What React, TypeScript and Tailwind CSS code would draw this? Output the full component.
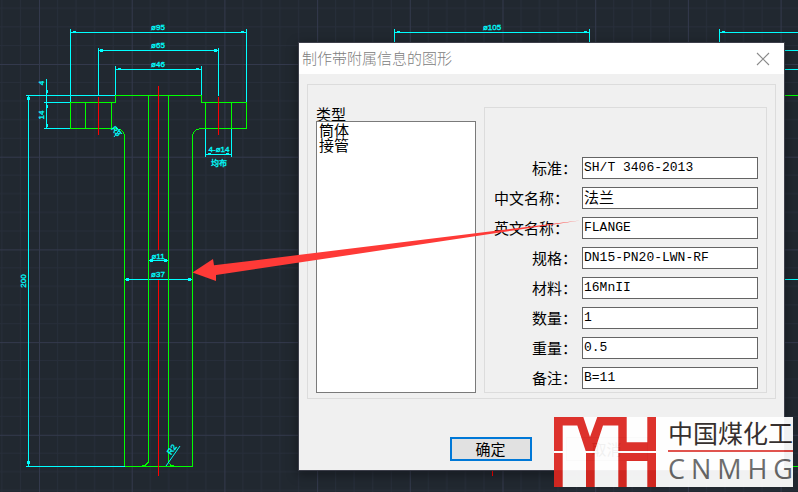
import { useState } from "react";

interface IField {
  id: string;
  label: string;
  value: string;
}

const types = ["筒体", "接管"];

const initialFields: IField[] = [
  { id: "standard", label: "标准：", value: "SH/T 3406-2013" },
  { id: "nameCn", label: "中文名称：", value: "法兰" },
  { id: "nameEn", label: "英文名称：", value: "FLANGE" },
  { id: "spec", label: "规格：", value: "DN15-PN20-LWN-RF" },
  { id: "material", label: "材料：", value: "16MnII" },
  { id: "count", label: "数量：", value: "1" },
  { id: "weight", label: "重量：", value: "0.5" },
  { id: "remark", label: "备注：", value: "B=11" },
];

// CAD model space: grid + flange drawing
function Drawing() {
  return (
    <svg className="absolute inset-0 h-full w-full" aria-hidden="true">
      <defs>
        <pattern id="grid" x="39" y="64" width="92.7" height="92.7" patternUnits="userSpaceOnUse">
          <path
            d="M18.5 0V92.7M37 0V92.7M55.6 0V92.7M74.2 0V92.7M0 18.5H92.7M0 37H92.7M0 55.6H92.7M0 74.2H92.7"
            stroke="#272e3a"
          />
          <path d="M0.5 0V92.7M0 0.5H92.7" stroke="#33394c" />
        </pattern>
      </defs>
      <rect width="100%" height="100%" fill="url(#grid)" />

      {/* dimensions */}
      <g stroke="#00ffff" fill="none" shapeRendering="crispEdges">
        <path d="M70 32.5H247M70.5 29V102M246.5 29V102" />
        <path d="M98 50.5H219M98.5 48V96M218.5 48V96" />
        <path d="M115 69.5H202M115.5 66V96M201.5 66V96" />
        <path d="M26 95.5H115M28.5 96V466" />
        <path d="M46.5 79V129M44 102.5H70M44 128.5H70" />
        <path d="M205.5 129V157M231.5 129V157M205 154.5H232" />
        <path d="M149 260.5H168M125 279.5H192" />
        <path d="M394.5 43V29M394 32.5H590M589.5 29V43" />
        <path d="M719.5 43V29M719 32.5H798M784 50.5H798M784 69.5H798M784 279.5H798" />
      </g>
      {/* arrow heads */}
      <g fill="#00ffff" shapeRendering="crispEdges">
        <path d="M73 31h3v1h-3zM241 31h3v1h-3zM118 68h3v1h-3zM196 68h3v1h-3zM397 31h3v1h-3zM584 31h3v1h-3zM722 31h3v1h-3z" />
        <path d="M100 49h3v3h-3zM214 49h3v3h-3zM27 97h3v3h-3zM27 461h3v3h-3zM47 90h1v3h-1zM47 105h1v3h-1zM47 124h1v3h-1z" />
        <path d="M208 153h3v1h-3zM226 153h3v1h-3zM150 259h3v3h-3zM164 259h3v3h-3zM126 278h3v3h-3zM188 278h3v3h-3z" />
      </g>

      {/* outline */}
      <g stroke="#00ff00" fill="none" shapeRendering="crispEdges">
        <path d="M70.5 102V129M246.5 102V129M70 102.5H116M201 102.5H247M115.5 95V103M201.5 95V103" />
        <path d="M115 95.5H202" />
        <path d="M70 128.5H117M200 128.5H247M124.5 137V467M192.5 137V467M124 466.5H193" />
        <path d="M116 128.5Q124.5 129 124.5 138M201 128.5Q192.5 129 192.5 138" />
        <path d="M85.5 102V128M111.5 102V128M205.5 102V128M231.5 102V128" />
        <path d="M148.5 96V462L145 465.5H142M168.5 96V462L171 465.5H174" />
        <path d="M784 95.5H798M784 466.5H798" />
      </g>
      <path d="M26 466.5H125" stroke="#00ffff" shapeRendering="crispEdges" />
      {/* axes */}
      <path
        d="M158.5 86V250M158.5 280V476M98.5 97V135M218.5 97V135M492.5 470V476"
        stroke="#ff0000"
        shapeRendering="crispEdges"
      />
      <path d="M180 446L166 466M116 127L122 134M114 137L120 129" stroke="#00ffff" />

      <g
        fill="#00ffff"
        stroke="#00ffff"
        strokeWidth="0.3"
        textAnchor="middle"
        className="font-['Liberation_Sans_Narrow','Liberation_Sans','Noto_Sans_CJK_SC',sans-serif] text-[8px]"
      >
        <text x="158" y="30">ø95</text>
        <text x="158" y="48">ø65</text>
        <text x="158" y="67">ø46</text>
        <text x="158" y="259">ø11</text>
        <text x="158" y="277">ø37</text>
        <text x="492" y="30">ø105</text>
        <text x="219" y="152">4-ø14</text>
        <text x="219" y="166">均布</text>
        <text transform="translate(44 83) rotate(-90)">4</text>
        <text transform="translate(44 115) rotate(-90)">14</text>
        <text transform="translate(26 281) rotate(-90)">200</text>
        <text transform="translate(114 133) rotate(50)">R3</text>
        <text transform="translate(174 451) rotate(-55)">R2</text>
      </g>
    </svg>
  );
}

function PropertyDialog() {
  const [fields, setFields] = useState<IField[]>(initialFields);

  const onChange = (id: string, value: string) => {
    setFields(fields.map((f) => (f.id === id ? { ...f, value } : f)));
  };

  return (
    <section
      role="dialog"
      aria-labelledby="dialog-title"
      className="absolute top-[43px] left-[299px] w-[485px] bg-[#f0f0f0] text-[15px] text-black shadow-[0_0_0_1px_#3d3f4a,0_3px_10px_2px_rgba(0,0,0,0.35)]"
    >
      <header className="flex h-[31px] items-center justify-between bg-white pr-3 pl-[3px]">
        <h1 id="dialog-title" className="font-light text-[#808080]">
          制作带附属信息的图形
        </h1>
        <button type="button" aria-label="关闭" className="p-[2px]">
          <svg width="14" height="14" viewBox="0 0 14 14" stroke="#8a8a8a" strokeWidth="1.1">
            <path d="M1 1L13 13M13 1L1 13" />
          </svg>
        </button>
      </header>

      <form className="px-2 pt-[10px] pb-[9px]" onSubmit={(e) => e.preventDefault()}>
        <div className="flex gap-2 border border-[#dcdcdc] px-2 pt-[22px] pb-[5px]">
          <div className="flex w-[160px] flex-col">
            <label htmlFor="type" className="leading-[14px]">
              类型
            </label>
            <select
              id="type"
              size={10}
              className="h-[272px] w-full overflow-hidden border border-[#7a7a7a] bg-white pl-[2px]"
            >
              {types.map((t) => (
                <option key={t} className="flex h-[15px] min-h-0 items-center p-0 leading-[15px]">
                  {t}
                </option>
              ))}
            </select>
          </div>

          <div className="flex flex-1 flex-col justify-end gap-2 border border-[#dcdcdc] pr-2 pb-[3px]">
            {fields.map((f) => (
              <div key={f.id} className="flex items-center justify-end gap-[5px]">
                <label
                  htmlFor={f.id}
                  className={f.label.length > 3 ? "pr-2 leading-[22px]" : "leading-[22px]"}
                >
                  {f.label}
                </label>
                <input
                  id={f.id}
                  type="text"
                  value={f.value}
                  onChange={(e) => onChange(f.id, e.target.value)}
                  className={
                    f.id === "nameCn"
                      ? "h-[22px] w-[176px] border border-[#646464] bg-white px-px pb-[2px]"
                      : "h-[22px] w-[176px] border border-[#646464] bg-white px-px pb-[2px] font-['Liberation_Mono',monospace] text-[13px]"
                  }
                />
              </div>
            ))}
          </div>
        </div>

        <div className="flex justify-center gap-[34px] pt-[38px] pl-[14px]">
          <button
            type="submit"
            className="h-6 w-[82px] border-2 border-[#0078d7] bg-[#e1e1e1] leading-[18px]"
          >
            确定
          </button>
          <button type="button" className="h-6 w-[82px] border border-[#adadad] bg-[#e1e1e1] leading-[18px]">
            取消
          </button>
        </div>
      </form>
    </section>
  );
}

function Watermark() {
  return (
    <div className="pointer-events-none absolute top-[417px] left-[554px] flex h-[70px] w-[239px] gap-3 bg-white opacity-94">
      <svg width="102" height="70" viewBox="0 0 102 70" fill="#dc2720" className="shrink-0">
        <path d="M0 0H29.3L36 20L43.3 0H72.7V25.3H93.3V0H102V34H64.3V8.5H49L40.7 34H31.7L23.3 8.5H8.7V34H0Z" />
        <path d="M0 36H8.7V70H0ZM32 36H40.7V70H32ZM64.3 36H102V70H93.3V44H72.7V70H64.3Z" />
      </svg>
      <div className="flex flex-1 flex-col">
        <p className="h-[33px] text-[25px] leading-[31px] whitespace-nowrap text-[#2b2523]">中国煤化工</p>
        <hr className="border-t-2 border-[#e04a44]" />
        <p className="flex justify-between font-['Open_Sans',sans-serif] text-[27px] leading-[34px] text-[#666]">
          {"CNMHG".split("").map((c) => (
            <span key={c}>{c}</span>
          ))}
        </p>
      </div>
    </div>
  );
}

export default function App() {
  return (
    <main
      lang="zh-CN"
      className="relative min-h-screen overflow-hidden bg-[#212830] font-['Noto_Sans_CJK_SC',sans-serif]"
    >
      <Drawing />
      <PropertyDialog />
      {/* pointer from the form to the part */}
      <svg className="pointer-events-none absolute inset-0 h-full w-full" aria-hidden="true">
        <path d="M192.5 272.5L213 259L214 265.3L580 220.5L216 275L216 281Z" fill="#fe3a37" />
      </svg>
      <Watermark />
    </main>
  );
}
